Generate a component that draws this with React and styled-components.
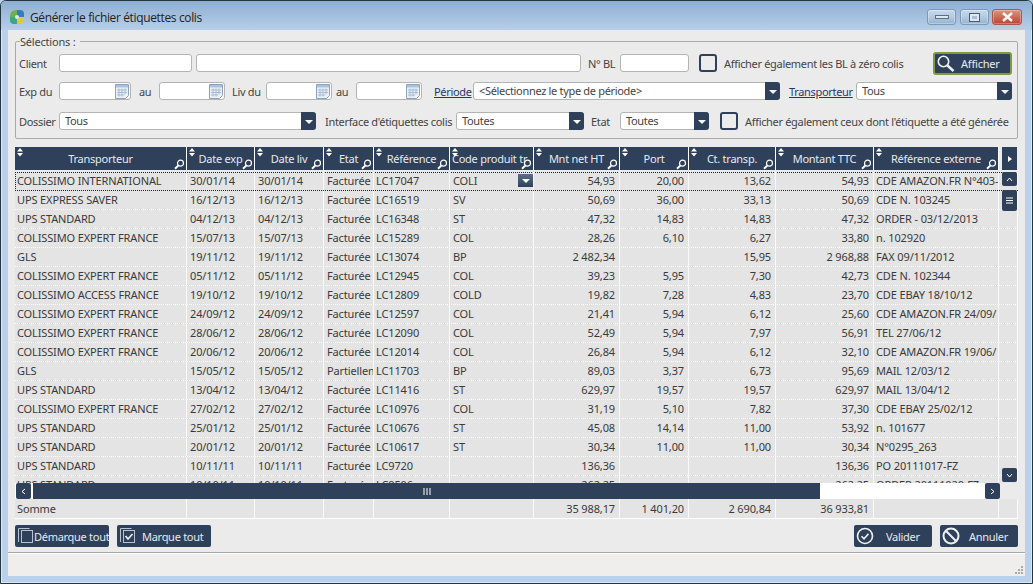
import React from 'react';
import styled, { createGlobalStyle } from 'styled-components';

const NAVY = '#2f405a';
const COLS = '172px 68px 69px 50px 76px 84px 86px 69px 87px 98px 125px';

const Global = createGlobalStyle`
  html, body { margin: 0; padding: 0; background: #b9d1ea; }
  * { box-sizing: border-box; }
  svg { flex: none; }
  body { font-family: "Noto Sans", "Open Sans", "Liberation Sans", sans-serif; font-size: 11px; color: #333; }
`;
const Win = styled.div`
  width: 1033px; height: 584px; display: flex; flex-direction: column; overflow: hidden;
  border: 1px solid #23353f; border-radius: 6px 6px 0 0; background: #b9d1ea;
  box-shadow: inset 0 0 0 1px #dbe8f5;
`;
const TitleBar = styled.div`
  height: 29px; flex: none; display: flex; align-items: center; padding: 3px 10px 0 8px;
  background: linear-gradient(#8eafd2, #b7cfe8);
`;
const Title = styled.div`
  font-size: 12px; color: #222; margin-left: 5px; flex: 1; letter-spacing: -0.36px; font-family: "Open Sans", sans-serif;
`;
const WinBtn = styled.div`
  width: ${p => p.$w}px; height: 16px; margin-left: ${p => p.$gap}px; border-radius: 3px;
  border: 1px solid ${p => p.$close ? '#a8594e' : '#7e98b5'}; display: flex; align-items: center; justify-content: center;
  background: ${p => p.$close ? 'linear-gradient(#dc9385, #cf6a58 50%, #b94434)' : 'linear-gradient(#c9d9ea, #b3cae1 50%, #97b3d0)'};
  box-shadow: inset 0 0 0 1px rgba(255,255,255,.3);
`;
const Client = styled.div`
  flex: 1; margin: 0 7px 7px 7px; background: #ebebeb; display: flex; flex-direction: column; min-height: 0;
`;
const Fieldset = styled.fieldset`
  margin: 5px 7px 0 7px; height: 104px; padding: 0 0 0 3px; border: 1px solid #a9a9a9; border-radius: 2px;
  display: flex; flex-direction: column; position: relative;
`;
const Legend = styled.legend`
  padding: 0 4px 0 0; margin-left: 1px; font-size: 11px; line-height: 13px; color: #444; letter-spacing: -0.2px;
`;
const FormRow = styled.div`
  display: flex; align-items: center; height: 22px; margin-top: ${p => p.$mt || 0}px; letter-spacing: -0.32px;
`;
const Lbl = styled.span`
  width: ${p => p.$w ? p.$w + 'px' : 'auto'}; margin-left: ${p => p.$ml || 0}px; flex: none; white-space: nowrap; color: #444;
  ${p => p.$link && 'text-decoration: underline; color: #1f3a6b;'}
`;
const Field = styled.div`
  width: ${p => p.$w}px; height: 18px; margin-left: ${p => p.$ml || 0}px; flex: none; background: #fff;
  border: 1px solid #b4b4b4; border-radius: 3px; position: relative; display: flex; align-items: center;
  padding-left: 5px; color: #444; line-height: 16px;
`;
const SelectArrow = styled.span`
  position: absolute; right: -1px; top: -1px; bottom: -1px; width: 15px; background: ${NAVY}; border-radius: 0 3px 3px 0;
  display: flex; align-items: center; justify-content: center;
  &::after { content: ''; border-left: 4px solid transparent; border-right: 4px solid transparent; border-top: 4px solid #fff; margin-top: 1px; }
`;
const CalWrap = styled.span`position: absolute; right: 0; top: 0; display: flex;`;
const Check = styled.span`
  width: 18px; height: 18px; margin-left: ${p => p.$ml}px; flex: none; border: 2px solid ${NAVY}; border-radius: 3px; background: #ececec;
`;
const Afficher = styled.div`
  width: 79px; height: 23px; margin-left: ${p => p.$ml}px; flex: none; background: ${NAVY}; border: 2px solid #7e9a3c; border-radius: 3px;
  display: flex; align-items: center; color: #e8ecf2; padding-left: 1px; gap: 5px; letter-spacing: -0.2px;
`;
const Grid = styled.div`
  margin: 8px 7px 0 7px; position: relative; display: flex; flex-direction: column; background: #ebebeb;
`;
const HeadRow = styled.div`
  display: flex; height: 23px; margin-bottom: 2px;
`;
const HeadCells = styled.div`
  display: grid; grid-template-columns: ${COLS}; width: 984px; letter-spacing: -0.25px;
`;
const HeadCell = styled.div`
  background: ${NAVY}; color: #e6eaf0; position: relative; display: flex; align-items: center; justify-content: ${p => p.$clip ? 'flex-start' : 'center'};
  padding-left: ${p => p.$clip ? 2 : 0}px; border-right: 1px solid #fff; white-space: nowrap; overflow: hidden; line-height: 22px;
`;
const Sort = styled.span`
  position: absolute; left: 2px; top: 1px; display: flex;
`;
const Loupe = styled.span`
  position: absolute; right: 1px; bottom: 0; display: flex;
`;
const ScrollTop = styled.div`
  width: 15px; height: 23px; margin-left: 3px; background: ${NAVY}; display: flex; align-items: center; justify-content: center;
  &::after { content: ''; border-top: 3px solid transparent; border-bottom: 3px solid transparent; border-left: 4px solid #fff; }
`;
const Viewport = styled.div`
  height: 311px; overflow: hidden; position: relative;
`;
const Row = styled.div`
  display: grid; grid-template-columns: ${COLS} 19px; height: 19px; background: #e4e4e4;
  border-bottom: 1px dotted #fff; position: relative; letter-spacing: -0.13px;
  ${p => p.$sel && 'outline: 1px dotted #222; outline-offset: -1px;'}
`;
const Cell = styled.div`
  padding: 0 ${p => p.$right ? '4px' : '2px'}; line-height: 18px; white-space: nowrap; overflow: hidden; color: #3a3a3a;
  text-align: ${p => p.$right ? 'right' : 'left'}; border-right: 1px solid #fafafa; position: relative;
  &:nth-child(n+2):not(:nth-child(5)):not(:nth-child(11)) { padding-left: 3px; }
`;
const CellArrow = styled.span`
  position: absolute; right: 0; top: 2px; width: 15px; height: 13px; background: linear-gradient(#5b6d87, #2f405a);
  display: flex; align-items: center; justify-content: center;
  &::after { content: ''; border-left: 4px solid transparent; border-right: 4px solid transparent; border-top: 4px solid #fff; }
`;
const HBar = styled.div`
  height: 16px; width: 985px; display: flex; background: #fff; align-items: stretch; padding-left: 1px;
`;
const BarBtn = styled.div`
  width: 15px; flex: none; background: ${NAVY}; color: #fff; border-radius: 2px; display: flex; align-items: center; justify-content: center;
`;
const Thumb = styled.div`
  width: 787px; margin-left: 2px; background: ${NAVY}; display: flex; align-items: center; justify-content: center; color: #fff;
`;
const Spacer = styled.div`flex: 1;`;
const VBar = styled.div`
  position: absolute; right: 1px; top: 25px; width: 15px; height: 310px; display: flex; flex-direction: column; align-items: stretch;
`;
const VBtn = styled.div`
  height: ${p => p.$h}px; margin-top: ${p => p.$mt || 0}px; background: ${NAVY}; border-radius: 2px; display: flex; align-items: center; justify-content: center;
`;
const SumRow = styled.div`
  display: grid; grid-template-columns: ${COLS} 19px; height: 20px; background: #e4e4e4; border-bottom: 1px solid #fff; letter-spacing: -0.13px;
`;
const SumCell = styled(Cell)`line-height: 19px;`;
const Footer = styled.div`
  display: flex; margin: 6px 7px 0 7px; height: 22px; letter-spacing: -0.28px;
`;
const Btn = styled.div`
  width: ${p => p.$w}px; margin-left: ${p => p.$ml || 0}px; background: ${NAVY}; border-radius: 2px; color: #e6eaf0; display: flex; align-items: center;
  padding-left: ${p => p.$pl || 2}px; gap: ${p => p.$gap}px; flex: none; white-space: nowrap;
`;
const Status = styled.div`
  margin-top: 5px; flex: 1; border-top: 1px solid #a6a6a6; box-shadow: inset 0 1px 0 #fff; background: #efeeec; position: relative;
`;
const Grip = styled.svg`position: absolute; right: 1px; bottom: 1px;`;

const Logo = () => (
  <svg width="16" height="16" viewBox="0 0 16 16">
    <path d="M1 7a6 6 0 0 1 6-6h1v7H1z" fill="#6fb04a" />
    <path d="M8 1h3a4 4 0 0 1 4 4v3H8z" fill="#2f7fc4" />
    <path d="M1 8h7v7H5a4 4 0 0 1-4-4z" fill="#3ea58a" />
    <path d="M8 8h7v2a5 5 0 0 1-5 5H8z" fill="#e0c83a" />
    <circle cx="8" cy="8" r="2" fill="#dfe9ee" />
  </svg>
);
const Cal = () => (
  <svg width="16" height="17" viewBox="0 0 16 17">
    <path d="M1.5 1.5h13v11l-3 3h-10z" fill="#e9f0f7" stroke="#8ba2bc" />
    <rect x="2" y="2" width="12" height="2.5" fill="#a9c3de" />
    <path d="M3 7h10M3 9.5h10M3 12h7M5 5.5v8M8 5.5v8M11 5.5v6" stroke="#a9bcd0" strokeWidth="1" />
  </svg>
);
const SortIcon = () => (
  <svg width="6" height="9" viewBox="0 0 6 9"><path d="M3 0l3 3.5H0zM3 8.5L0 5h6z" fill="#fff" /></svg>
);
const LoupeIcon = () => (
  <svg width="11" height="11" viewBox="0 0 11 11" fill="none" stroke="#fff"><circle cx="6.5" cy="4.2" r="3" strokeWidth="1.2" /><path d="M4.2 6.6L1 9.8" strokeWidth="2" /></svg>
);
const Search = () => (
  <svg width="20" height="19" viewBox="0 0 20 19" fill="none" stroke="#eef2f6"><circle cx="7.5" cy="7.5" r="5.2" strokeWidth="1.6" /><path d="M11.5 11.5l6 5.5" strokeWidth="2.4" /></svg>
);
const Squares = ({ check }) => (
  <svg width="15" height="16" viewBox="0 0 15 16" fill="none" stroke="#b9c3d0">
    <path d="M.5 14V.5h11" />
    <rect x="3.5" y="2.5" width="11" height="12" />
    {check && <path d="M5.5 8l2.5 3 4.5-5" strokeWidth="1.8" stroke="#e6eaf0" />}
  </svg>
);
const Valid = () => (
  <svg width="18" height="18" viewBox="0 0 18 18" fill="none" stroke="#eef2f6"><circle cx="9" cy="9" r="7.5" strokeWidth="1.6" /><path d="M5.5 9.3l2.5 2.5 4.5-5" strokeWidth="1.6" /></svg>
);
const Ban = () => (
  <svg width="18" height="18" viewBox="0 0 18 18" fill="none" stroke="#eef2f6" strokeWidth="2"><circle cx="9" cy="9" r="7.5" /><path d="M3.8 3.8l10.4 10.4" /></svg>
);
const Chevron = ({ d }) => (
  <svg width="7" height="7" viewBox="0 0 7 7" fill="none" stroke="#fff"><path d={d} /></svg>
);

const heads = ['Transporteur', 'Date exp', 'Date liv', 'Etat', 'Référence', 'Code produit tr', 'Mnt net HT', 'Port', 'Ct. transp.', 'Montant TTC', 'Référence externe'];
const F = 'Facturée';
const rows = [
  ['COLISSIMO INTERNATIONAL', '30/01/14', '30/01/14', F, 'LC17047', 'COLI', '54,93', '20,00', '13,62', '54,93', 'CDE AMAZON.FR N°403-'],
  ['UPS EXPRESS SAVER', '16/12/13', '16/12/13', F, 'LC16519', 'SV', '50,69', '36,00', '33,13', '50,69', 'CDE N. 103245'],
  ['UPS STANDARD', '04/12/13', '04/12/13', F, 'LC16348', 'ST', '47,32', '14,83', '14,83', '47,32', 'ORDER - 03/12/2013'],
  ['COLISSIMO EXPERT FRANCE', '15/07/13', '15/07/13', F, 'LC15289', 'COL', '28,26', '6,10', '6,27', '33,80', 'n. 102920'],
  ['GLS', '19/11/12', '19/11/12', F, 'LC13074', 'BP', '2 482,34', '', '15,95', '2 968,88', 'FAX 09/11/2012'],
  ['COLISSIMO EXPERT FRANCE', '05/11/12', '05/11/12', F, 'LC12945', 'COL', '39,23', '5,95', '7,30', '42,73', 'CDE N. 102344'],
  ['COLISSIMO ACCESS FRANCE', '19/10/12', '19/10/12', F, 'LC12809', 'COLD', '19,82', '7,28', '4,83', '23,70', 'CDE EBAY 18/10/12'],
  ['COLISSIMO EXPERT FRANCE', '24/09/12', '24/09/12', F, 'LC12597', 'COL', '21,41', '5,94', '6,12', '25,60', 'CDE AMAZON.FR 24/09/'],
  ['COLISSIMO EXPERT FRANCE', '28/06/12', '28/06/12', F, 'LC12090', 'COL', '52,49', '5,94', '7,97', '56,91', 'TEL 27/06/12'],
  ['COLISSIMO EXPERT FRANCE', '20/06/12', '20/06/12', F, 'LC12014', 'COL', '26,84', '5,94', '6,12', '32,10', 'CDE AMAZON.FR 19/06/'],
  ['GLS', '15/05/12', '15/05/12', 'Partiellem', 'LC11703', 'BP', '89,03', '3,37', '6,73', '95,69', 'MAIL 12/03/12'],
  ['UPS STANDARD', '13/04/12', '13/04/12', F, 'LC11416', 'ST', '629,97', '19,57', '19,57', '629,97', 'MAIL 13/04/12'],
  ['COLISSIMO EXPERT FRANCE', '27/02/12', '27/02/12', F, 'LC10976', 'COL', '31,19', '5,10', '7,82', '37,30', 'CDE EBAY 25/02/12'],
  ['UPS STANDARD', '25/01/12', '25/01/12', F, 'LC10676', 'ST', '45,08', '14,14', '11,00', '53,92', 'n. 101677'],
  ['UPS STANDARD', '20/01/12', '20/01/12', F, 'LC10617', 'ST', '30,34', '11,00', '11,00', '30,34', 'N°0295_263'],
  ['UPS STANDARD', '10/11/11', '10/11/11', F, 'LC9720', '', '136,36', '', '', '136,36', 'PO 20111017-FZ'],
  ['UPS STANDARD', '10/10/11', '10/10/11', F, 'LC9506', '', '262,25', '', '', '262,25', 'ORDER 20111020-FZ'],
];
const isRight = i => i >= 6 && i <= 9;
const sums = ['Somme', '', '', '', '', '', '35 988,17', '1 401,20', '2 690,84', '36 933,81', ''];

export default function App() {
  return (
    <Win>
      <Global />
      <TitleBar>
        <Logo />
        <Title>Générer le fichier étiquettes colis</Title>
        <WinBtn $w={29} $gap={0}><svg width="14" height="4"><rect x=".5" y=".5" width="13" height="3" fill="#dfe7f0" stroke="#5a6f88" /></svg></WinBtn>
        <WinBtn $w={29} $gap={4}><svg width="11" height="9"><rect x=".5" y=".5" width="10" height="8" fill="#dfe7f0" stroke="#4a5c74" /><rect x="3" y="3" width="5" height="3" fill="#a8bfd8" /></svg></WinBtn>
        <WinBtn $w={30} $gap={3} $close><svg width="13" height="10" stroke="#f4f4f4" strokeWidth="2.6"><path d="M2 1l9 8M11 1l-9 8" /></svg></WinBtn>
      </TitleBar>
      <Client>
        <Fieldset>
          <Legend>Sélections :</Legend>
          <FormRow $mt={4}>
            <Lbl $w={40}>Client</Lbl>
            <Field $w={133} />
            <Field $w={385} $ml={4} />
            <Lbl $w={32} $ml={7}>N° BL</Lbl>
            <Field $w={69} />
            <Check $ml={10} />
            <Lbl $w={209} $ml={7}>Afficher également les BL à zéro colis</Lbl>
            <Afficher $ml={0}><Search />Afficher</Afficher>
          </FormRow>
          <FormRow $mt={6}>
            <Lbl $w={40}>Exp du</Lbl>
            <Field $w={72}><CalWrap><Cal /></CalWrap></Field>
            <Lbl $w={20} $ml={8}>au</Lbl>
            <Field $w={66}><CalWrap><Cal /></CalWrap></Field>
            <Lbl $w={34} $ml={7}>Liv du</Lbl>
            <Field $w={66}><CalWrap><Cal /></CalWrap></Field>
            <Lbl $w={20} $ml={4}>au</Lbl>
            <Field $w={66}><CalWrap><Cal /></CalWrap></Field>
            <Lbl $w={39} $ml={12} $link>Période</Lbl>
            <Field $w={307}>&lt;Sélectionnez le type de période&gt;<SelectArrow /></Field>
            <Lbl $w={67} $ml={9} $link>Transporteur</Lbl>
            <Field $w={156}>Tous<SelectArrow /></Field>
          </FormRow>
          <FormRow $mt={8}>
            <Lbl $w={40}>Dossier</Lbl>
            <Field $w={257}>Tous<SelectArrow /></Field>
            <Lbl $w={131} $ml={9}>Interface d'étiquettes colis</Lbl>
            <Field $w={128}>Toutes<SelectArrow /></Field>
            <Lbl $w={29} $ml={7}>Etat</Lbl>
            <Field $w={89}>Toutes<SelectArrow /></Field>
            <Check $ml={11} />
            <Lbl $ml={7}>Afficher également ceux dont l'étiquette a été générée</Lbl>
          </FormRow>
        </Fieldset>
        <Grid>
          <HeadRow>
            <HeadCells>
              {heads.map((h, i) => (
                <HeadCell key={h} $clip={i === 5}><Sort><SortIcon /></Sort>{h}<Loupe><LoupeIcon /></Loupe></HeadCell>
              ))}
            </HeadCells>
            <ScrollTop />
          </HeadRow>
          <Viewport>
            {rows.map((r, i) => (
              <Row key={i} $sel={i === 0}>
                {r.map((c, j) => (
                  <Cell key={j} $right={isRight(j)}>{c}{i === 0 && j === 5 && <CellArrow />}</Cell>
                ))}
                <Cell />
              </Row>
            ))}
          </Viewport>
          <VBar>
            <VBtn $h={14}><Chevron d="M1 5l2.5-3L6 5" /></VBtn>
            <VBtn $h={21} $mt={4}><svg width="7" height="7" stroke="#fff"><path d="M0 1h7M0 3.5h7M0 6h7" /></svg></VBtn>
            <Spacer />
            <VBtn $h={14}><Chevron d="M1 2l2.5 3L6 2" /></VBtn>
          </VBar>
          <HBar>
            <BarBtn><Chevron d="M5 1L2 3.5 5 6" /></BarBtn>
            <Thumb><svg width="8" height="7" stroke="#fff"><path d="M1 0v7M4 0v7M7 0v7" /></svg></Thumb>
            <Spacer />
            <BarBtn><Chevron d="M2 1l3 2.5L2 6" /></BarBtn>
          </HBar>
          <SumRow>
            {sums.map((c, j) => <SumCell key={j} $right={isRight(j)}>{c}</SumCell>)}
            <SumCell />
          </SumRow>
        </Grid>
        <Footer>
          <Btn $w={94} $gap={1} $pl={3}><Squares />Démarque tout</Btn>
          <Btn $w={94} $ml={8} $pl={3} $gap={7}><Squares check />Marque tout</Btn>
          <Spacer />
          <Btn $w={78} $pl={2} $gap={12}><Valid />Valider</Btn>
          <Btn $w={78} $ml={8} $pl={2} $gap={9}><Ban />Annuler</Btn>
        </Footer>
        <Status>
          <Grip width="10" height="10" fill="#aaa"><rect x="7" y="1" width="2" height="2" /><rect x="4" y="4" width="2" height="2" /><rect x="7" y="4" width="2" height="2" /><rect x="1" y="7" width="2" height="2" /><rect x="4" y="7" width="2" height="2" /><rect x="7" y="7" width="2" height="2" /></Grip>
        </Status>
      </Client>
    </Win>
  );
}
